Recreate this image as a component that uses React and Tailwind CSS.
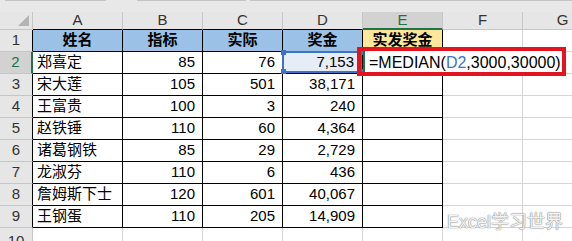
import React from 'react';

const cols = ['A', 'B', 'C', 'D', 'E', 'F', 'G'];
const widths = ['w-[90px]', 'w-[80px]', 'w-[80px]', 'w-[80px]', 'w-[80px]', 'w-[80px]', 'w-[80px]'];

const head = ['姓名', '指标', '实际', '奖金', '实发奖金'];
const data = [
  ['郑喜定', '85', '76', '7,153'],
  ['宋大莲', '105', '501', '38,171'],
  ['王富贵', '100', '3', '240'],
  ['赵铁锤', '110', '60', '4,364'],
  ['诸葛钢铁', '85', '29', '2,729'],
  ['龙淑芬', '110', '6', '436'],
  ['詹姆斯下士', '120', '601', '40,067'],
  ['王钢蛋', '110', '205', '14,909'],
];

const font = "font-['Microsoft_YaHei','Liberation_Sans','Noto_Sans_CJK_SC',sans-serif]";

function Handle({ pos }) {
  return <span className={`absolute w-[5px] h-[5px] bg-[#3b73c8] ${pos}`} />;
}

export default function App() {
  const rows = [];

  // header row (row 1)
  rows.push(
    <div key="r1" className="flex h-[22px]">
      <div className="w-[33px] shrink-0 flex items-center justify-center bg-[#e6e6e6] border-r border-b border-r-black border-b-[#c6c6c6] text-[15px] text-[#333]">1</div>
      {cols.map((c, i) => {
        const inTable = i < 5;
        const bg = i < 4 ? 'bg-[#9bc2e6]' : i === 4 ? 'bg-[#ffe699]' : 'bg-white';
        return (
          <div
            key={c}
            className={`${widths[i]} shrink-0 flex items-center justify-center border-r border-b ${inTable ? 'border-black' : 'border-[#d4d4d4]'} ${bg} text-[15px] font-bold text-black`}
          >
            {head[i] || ''}
          </div>
        );
      })}
    </div>
  );

  data.forEach((r, ri) => {
    const n = ri + 2;
    const active = n === 2;
    rows.push(
      <div key={n} className="flex h-[22px]">
        <div
          className={`w-[33px] shrink-0 flex items-center justify-center border-b border-b-[#c6c6c6] text-[15px] ${active ? 'bg-[#d2d2d2] text-[#217346] border-r-2 border-r-[#217346]' : 'bg-[#e6e6e6] text-[#333] border-r border-r-black'}`}
        >
          {n}
        </div>
        {cols.map((c, i) => {
          const inTable = i < 5;
          const border = inTable ? 'border-black' : 'border-[#d4d4d4]';
          if (active && i === 3) {
            return (
              <div key={c} className={`${widths[i]} shrink-0 relative border-r border-b ${border}`}>
                <div className="absolute -left-px -top-px right-0 bottom-0 border-2 border-[#3b73c8] bg-[#e6edf7] flex items-center justify-end pr-[6px] text-[15px] text-black">
                  {r[3]}
                  <Handle pos="-left-[3px] -top-[3px]" />
                  <Handle pos="-right-[3px] -top-[3px]" />
                  <Handle pos="-left-[3px] -bottom-[3px]" />
                  <Handle pos="-right-[3px] -bottom-[3px]" />
                </div>
              </div>
            );
          }
          if (active && i === 4) {
            return (
              <div key={c} className={`${widths[i]} shrink-0 relative border-r border-b ${border} bg-white`}>
                <div className="absolute left-0 -top-px h-[23px] w-[200px] bg-white border-l-2 border-[#217346] z-10 flex items-center pl-[4px] text-[16px] text-black whitespace-nowrap">
                  =MEDIAN(<span className="text-[#3b73c8]">D2</span>,3000,30000)
                </div>
                <div className="absolute -left-[6px] -top-[5px] w-[209px] h-[29px] border-4 border-[#e3141f] z-20" />
              </div>
            );
          }
          const val = i < 4 ? r[i] : '';
          return (
            <div
              key={c}
              className={`${widths[i]} shrink-0 flex items-center border-r border-b ${border} bg-white text-[15px] text-black ${i === 0 ? 'justify-start pl-[4px]' : 'justify-end pr-[7px]'}`}
            >
              {val}
            </div>
          );
        })}
      </div>
    );
  });

  // row 10
  rows.push(
    <div key="r10" className="flex h-[22px]">
      <div className="w-[33px] shrink-0 flex items-start justify-center bg-[#e6e6e6] border-r border-r-[#c6c6c6] text-[15px] text-[#333] pt-[2px]">10</div>
      {cols.map((c, i) => (
        <div key={c} className={`${widths[i]} shrink-0 border-r border-[#d4d4d4] bg-white`} />
      ))}
    </div>
  );

  return (
    <div className={`relative w-[572px] h-[241px] overflow-hidden bg-white ${font}`}>
      {/* top strip */}
      <div className="h-[12px] bg-[#e8e8e8] relative">
        <div className="absolute top-0 left-[5px] w-[101px] h-[1px] bg-[#c4c4c4]" />
        <div className="absolute top-0 left-[137px] w-[109px] h-[1px] bg-[#c4c4c4]" />
        <div className="absolute top-0 left-[250px] w-[322px] h-[1px] bg-[#c4c4c4]" />
      </div>
      {/* column headers */}
      <div className="flex h-[18px] bg-[#e6e6e6]">
        <div className="w-[33px] shrink-0 relative border-r border-b border-[#c6c6c6]">
          <svg className="absolute right-[3px] bottom-[3px]" width="11" height="11" viewBox="0 0 11 11">
            <polygon points="11,0 11,11 0,11" fill="#b4b4b4" />
          </svg>
        </div>
        {cols.map((c, i) => (
          <div
            key={c}
            className={`${widths[i]} shrink-0 flex items-center justify-center border-r border-[#c6c6c6] text-[15px] ${
              i === 4
                ? 'bg-[#d2d2d2] text-[#217346] border-b-2 border-b-[#217346]'
                : i < 4
                ? 'text-[#333] border-b border-b-black'
                : 'text-[#333] border-b border-b-[#c6c6c6]'
            }`}
          >
            {c}
          </div>
        ))}
      </div>
      <div className="flex flex-col">{rows}</div>
      <div className="absolute left-[447px] top-[211px] text-[18px] leading-[22px] text-[#f2f2f2] [text-shadow:0_0_1px_#777,0_0_1px_#777] whitespace-nowrap">
        Excel学习世界
      </div>
    </div>
  );
}
